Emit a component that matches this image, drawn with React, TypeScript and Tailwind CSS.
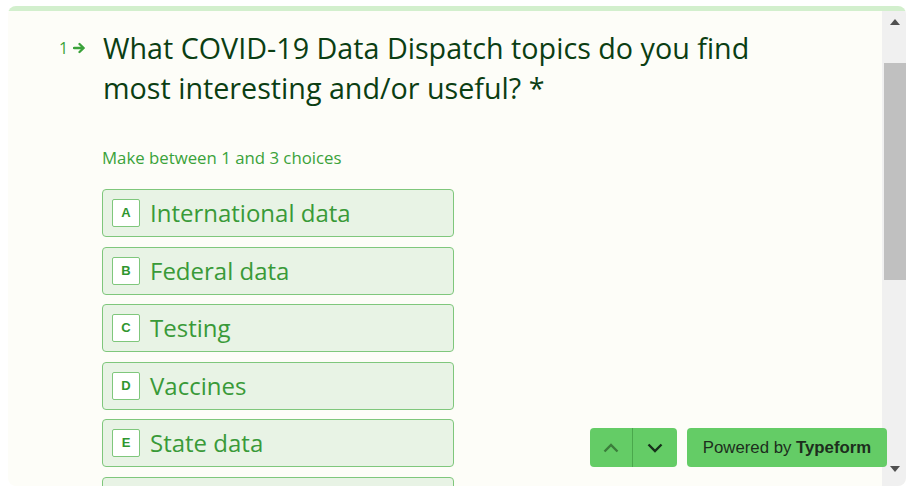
import React from "react";

const choices = [
  { key: "A", label: "International data" },
  { key: "B", label: "Federal data" },
  { key: "C", label: "Testing" },
  { key: "D", label: "Vaccines" },
  { key: "E", label: "State data" },
  { key: "", label: "" },
];

function Choice({ letter, label }: { letter: string; label: string }) {
  return (
    <div className="flex h-[48px] w-[352px] shrink-0 items-center gap-[10px] rounded-[4px] border border-[#7fc77c] bg-[#e8f3e5] pl-[9px]">
      <span className="flex h-[28px] w-[28px] items-center justify-center rounded-[2px] border border-[#7fc77c] bg-white font-['Liberation_Sans',Arial,sans-serif] text-[13px] font-bold text-[#2f962f]">
        {letter}
      </span>
      <span className="font-['Open_Sans',sans-serif] text-[24px] leading-[32px] text-[#399a38]">
        {label}
      </span>
    </div>
  );
}

export default function App() {
  return (
    <div className="h-[499px] w-[916px] bg-white pb-[13px] pl-[8px] pr-[10px] pt-[6px]">
      <div className="relative flex h-full flex-col overflow-hidden rounded-[8px] bg-[#fdfdf8]">
        {/* progress bar */}
        <div className="h-[5px] shrink-0 bg-[#d2efcd]" />

        <div className="flex min-h-0 flex-1">
          {/* scrolling content */}
          <div className="min-w-0 flex-1 overflow-hidden pl-[51px] pt-[17px]">
            <div className="flex">
              <div className="flex h-[40px] w-[44px] shrink-0 items-start gap-[5px] pt-[10px]">
                <span className="font-['Open_Sans',sans-serif] text-[16px] leading-[20px] text-[#3aa23a]">1</span>
                <svg width="14" height="20" viewBox="0 0 14 20" className="text-[#3aa23a]">
                  <path d="M1 10h9.5M6.5 6l4.2 4-4.2 4" fill="none" stroke="currentColor" strokeWidth="2.3" strokeLinecap="round" strokeLinejoin="round" />
                </svg>
              </div>
              <h1 className="font-['Open_Sans',sans-serif] text-[28.7px] leading-[40px] text-[#0b3e13]">
                What COVID-19 Data Dispatch topics do you find
                <br />
                most interesting and/or useful? *
              </h1>
            </div>

            <div className="ml-[43px] mt-[38px] flex flex-col">
              <p className="font-['Open_Sans',sans-serif] text-[16.8px] leading-[24px] text-[#3aa23a]">
                Make between 1 and 3 choices
              </p>
              <div className="mt-[19px] flex flex-col gap-[9.5px]">
                {choices.map((c, i) => (
                  <Choice key={i} letter={c.key} label={c.label} />
                ))}
              </div>
            </div>
          </div>

          {/* scrollbar */}
          <div className="flex w-[24px] shrink-0 flex-col bg-[#f0f0f0] pl-[2px]">
            <div className="flex h-[18px] items-center justify-center pt-[4px]">
              <svg width="10" height="6" viewBox="0 0 10 6">
                <path d="M0 6L5 0l5 6z" fill="#505050" />
              </svg>
            </div>
            <div className="mt-[34px] h-[217px] bg-[#c0c0c0]" />
            <div className="flex-1" />
            <div className="flex h-[22px] items-start justify-center pt-[2px]">
              <svg width="10" height="6" viewBox="0 0 10 6">
                <path d="M0 0h10L5 6z" fill="#505050" />
              </svg>
            </div>
          </div>
        </div>

        {/* floating nav */}
        <div className="absolute bottom-[19px] right-[19px] flex gap-[10px]">
          <div className="flex h-[39px] overflow-hidden rounded-[4px] bg-[#64cc66]">
            <button className="flex w-[43px] items-center justify-center border-r border-[#4aa84c]">
              <svg width="16" height="10" viewBox="0 0 16 10">
                <path d="M1.5 8.5L8 2l6.5 6.5" fill="none" stroke="#3b7d3b" strokeWidth="2.4" />
              </svg>
            </button>
            <button className="flex w-[44px] items-center justify-center">
              <svg width="16" height="10" viewBox="0 0 16 10">
                <path d="M1.5 1.5L8 8l6.5-6.5" fill="none" stroke="#16301a" strokeWidth="2.4" />
              </svg>
            </button>
          </div>
          <button className="flex h-[39px] w-[200px] items-center justify-center rounded-[4px] bg-[#64cc66] font-['Liberation_Sans',Arial,sans-serif] text-[16.8px] text-[#1d2e1d]">
            Powered by&nbsp;<b>Typeform</b>
          </button>
        </div>
      </div>
    </div>
  );
}
